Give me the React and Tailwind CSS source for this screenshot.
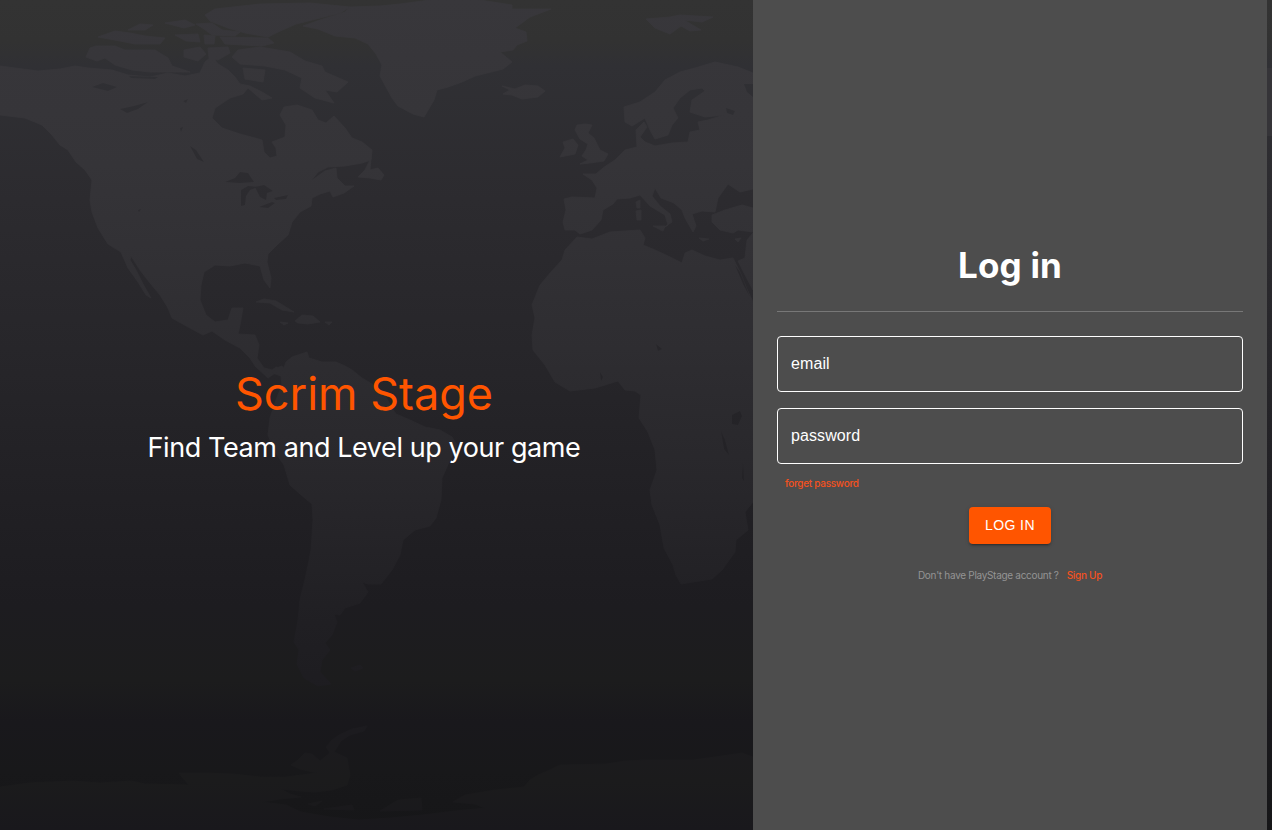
const LAND = [
  // North America
  'M0 66L15 68 38 71 60 69 75 66 88 68 112 70 128 75 150 77 168 73 185 76 200 73 205 62 212 56 218 64 228 70 235 77 240 84 250 86 262 92 272 98 262 100 248 88 243 94 230 98 215 108 212 118 222 128 240 134 262 140 264 152 270 158 277 156 276 148 272 142 285 137 286 125 280 115 284 107 297 105 312 110 318 120 326 123 334 116 345 128 352 138 362 142 372 150 371 160 362 163 345 166 328 167 318 172 311 181 325 171 336 168 337 178 345 186 354 186 344 193 333 197 330 191 320 194 312 198 311 206 300 212 292 222 288 235 277 245 268 254 267 262 271 278 270 288 264 280 260 266 245 263 230 266 215 265 204 272 201 285 200 300 206 315 215 322 228 320 232 308 243 308 240 325 238 334 255 335 259 345 257 358 264 368 272 370 282 366 287 373 275 373 268 378 255 366 250 358 240 348 225 340 212 331 203 335 190 328 172 318 168 308 160 295 150 283 140 270 131 256 130 260 136 270 143 284 151 298 146 295 138 282 128 268 121 252 108 244 98 228 92 212 90 200 92 180 85 170 76 162 68 150 60 145 52 135 42 125 25 118 0 115Z',
  // Arctic islands
  'M86 57L90 48 96 46 115 46 125 50 155 50 168 58 172 66 190 72 150 72 132 70 115 65 105 58 97 61Z',
  'M98 37L115 31 130 33 145 36 165 38 160 44 135 44 120 41Z M128 30L140 24 153 25 145 30Z M165 23L185 20 195 25 184 28Z M175 35L198 34 200 42 186 41Z M204 35L215 36 214 44 205 44Z M220 37L268 38 274 43 262 46 225 44Z M196 24L212 23 222 30 240 32 235 36 212 35 204 29Z M184 50L200 47 206 54 198 61 184 57Z M208 48L228 47 230 53 218 60 209 58Z M243 68L265 70 263 82 245 79Z',
  'M205 15L215 9 260 4 310 3 350 7 340 13 320 18 296 24 278 32 268 37 245 33 228 28 210 21Z',
  'M238 50L260 47 290 52 305 61 322 66 325 72 348 82 337 92 325 90 334 103 315 98 300 88 302 78 285 70 265 66 240 64 232 57Z',
  // Greenland
  'M303 26L320 20 345 12 350 7 380 6 400 4 430 0 480 0 512 5 512 9 551 9 530 17 515 28 526 32 527 41 517 45 513 50 500 52 512 62 503 69 475 76 462 82 448 87 437 90 434 100 424 117 413 114 398 106 392 98 386 87 380 76 382 65 376 54 368 44 355 38 335 36 318 29Z',
  'M502 86L515 89 525 85 538 86 545 91 538 97 522 99 512 95 503 94 510 90Z',
  'M646 19L670 17 680 15 713 17 702 22 684 20 701 30 690 31 681 26 670 34 655 28Z',
  // Newfoundland and Caribbean
  'M371 158L365 170 358 177 370 178 381 180 384 175 378 168 370 170Z M256 302L264 299 276 301 294 312 282 310 270 303Z M295 321L302 315 313 316 320 322 308 324 298 323Z M280 322L288 323 284 325Z M325 322L332 322 329 325Z',
  // Great Britain and Ireland
  'M577 125L585 124 592 125 588 133 594 138 600 150 608 154 604 161 590 163 580 164 588 160 582 156 586 150 588 144 580 139 575 130Z M560 157L565 148 563 142 573 139 578 145 575 154Z',
  // Europe
  'M753 73L738 67 715 62 695 68 680 72 665 80 655 92 640 102 624 107 625 122 632 126 645 118 650 130 655 139 668 135 672 125 678 118 673 108 680 98 690 90 702 88 705 91 692 100 690 112 705 117 724 115 708 120 698 122 700 130 690 132 688 142 672 143 655 146 645 142 640 137 647 127 644 122 636 130 637 147 625 150 615 160 603 168 596 174 583 174 592 180 597 188 595 198 572 197 564 199 566 210 563 222 565 230 575 230 580 234 592 230 601 220 603 210 613 204 617 199 630 198 640 195 650 206 665 215 668 225 660 230 672 222 670 214 660 206 652 196 655 188 661 198 674 203 682 210 685 218 693 232 696 226 692 214 702 211 715 212 718 198 728 184 740 192 753 189Z',
  'M712 215L725 210 742 205 753 208 753 232 738 230 733 233 720 230 712 222Z M636 202L640 200 640 208 637 208Z M636 211L641 210 641 220 637 220Z M653 226L665 226 663 231Z M699 238L709 239 703 241Z M735 239L741 238 738 242Z',
  // Africa
  'M577 237L592 239 610 232 640 230 645 238 643 245 655 250 668 256 682 263 685 253 692 250 705 256 720 260 733 258 740 272 746 287 753 302 753 502 745 512 748 530 736 540 735 552 722 570 712 579 693 582 681 584 676 575 673 565 664 548 660 525 652 505 650 490 657 470 655 450 648 432 639 418 641 395 635 391 625 390 618 381 595 388 570 391 555 382 545 365 533 350 532 335 535 318 532 305 540 285 551 272 562 260 565 250Z',
  'M753 233L747 240 745 258 738 261 744 273 753 290Z',
  // South America
  'M270 372L276 367 283 370 286 362 292 357 307 352 309 358 322 362 336 362 345 366 352 370 362 378 372 384 385 395 392 408 396 414 410 420 425 427 440 430 452 437 457 445 450 460 442 478 441 500 436 518 430 526 415 530 403 540 400 555 392 570 381 584 368 584 362 582 368 592 360 603 345 608 340 615 334 614 337 622 332 635 325 643 330 650 322 660 320 672 331 684 318 686 304 678 297 664 299 650 294 642 298 620 300 600 306 575 311 550 313 520 312 504 300 494 290 485 284 465 275 452 268 435 270 418 276 400 282 385 281 376Z',
  'M351 668L360 665 363 668 355 671Z',
  // Antarctica
  'M0 787L29 783 73 781 100 783 131 781 145 784 189 785 182 777 179 773 205 773 233 774 260 777 286 777 317 773 300 769 291 765 298 760 305 753 312 754 320 761 330 753 326 747 332 740 339 735 352 729 367 726 364 731 350 735 341 741 334 752 347 758 350 775 347 785 332 790 315 792 300 791 281 789 290 794 301 797 280 799 262 802 286 805 301 812 330 817 359 820 390 818 422 815 455 811 485 808 475 804 453 802 465 795 495 790 524 787 530 780 538 775 550 770 560 765 606 764 625 761 645 760 693 760 715 757 742 753 753 757 753 830 0 830Z',
  'M308 804L322 801 315 806Z M324 809L352 805 354 810Z M380 811L398 800 421 798 422 810Z',
];

// Lakes and inland channels
const WATER = [
  'M92 87L103 83 117 87 108 91Z M120 109L134 106 148 102 138 109 127 113Z M183 101L188 99 186 103Z M180 128L183 127 181 132Z M190 146L196 150 204 162 197 159Z M225 182L235 178 240 172 248 173 254 182 240 183Z M241 190L248 186 258 187 250 190 246 196 245 205 241 206Z M255 187L264 185 273 191 267 193 266 200 260 197Z M259 207L272 202 275 203 268 208Z M274 198L288 195 286 199 276 200Z M138 210L141 209 139 212Z M129 76L158 77 155 79 131 78Z',
  'M726 108L735 111 733 115 727 113Z M744 84L753 84 753 97 747 92Z M656 344L662 349 658 351Z M732 415L740 411 742 416 738 425 732 424Z M721 431L725 440 729 455 724 449Z M743 462L744 481 742 478Z M600 372L603 377 601 381Z M735 265L740 272 750 297 743 284Z',
];

function WorldMap() {
  return (
    <svg
      className="absolute left-0 top-0 h-[830px] w-[753px]"
      viewBox="0 0 753 830"
      aria-hidden="true"
    >
      <defs>
        <linearGradient id="land" gradientUnits="userSpaceOnUse" x1="0" y1="0" x2="0" y2="830">
          <stop offset="0" stopColor="#38373b" />
          <stop offset="0.2" stopColor="#353438" />
          <stop offset="0.42" stopColor="#2e2d31" />
          <stop offset="0.6" stopColor="#27262a" />
          <stop offset="0.75" stopColor="#201f23" />
          <stop offset="0.88" stopColor="#1c1b1f" />
          <stop offset="0.94" stopColor="#1b1b1c" />
          <stop offset="1" stopColor="#19181c" />
        </linearGradient>
        <linearGradient id="water" gradientUnits="userSpaceOnUse" x1="0" y1="0" x2="0" y2="830">
          <stop offset="0.08" stopColor="#303034" />
          <stop offset="0.24" stopColor="#2c2b2f" />
          <stop offset="0.6" stopColor="#222125" />
        </linearGradient>
      </defs>
      <g fill="url(#land)" stroke="url(#land)" strokeWidth="0.8" strokeLinejoin="round">
        {LAND.map((d) => (
          <path key={d} d={d} />
        ))}
      </g>
      <g fill="url(#water)">
        {WATER.map((d) => (
          <path key={d} d={d} />
        ))}
      </g>
    </svg>
  );
}

function Field({ label, type }) {
  return (
    <input
      type={type}
      placeholder={label}
      aria-label={label}
      className="h-14 w-full rounded border border-white bg-transparent px-[13px] font-['Liberation_Sans',sans-serif] text-base tracking-[0.1px] text-white outline-none placeholder:text-white placeholder:opacity-100"
    />
  );
}

export default function App() {
  return (
    <div className="relative flex h-[830px] w-full overflow-hidden bg-[linear-gradient(to_bottom,#333333_0%,#323232_5%,#303034_8%,#2c2b2f_24%,#27262a_42%,#212024_60%,#1d1c20_73%,#1c1c1d_82%,#19181c_87%,#18181a_93%,#161618_100%)] font-['Inter',sans-serif]">
      <WorldMap />
      <section className="relative flex w-[753px] shrink-0 flex-col items-center justify-center pr-[25px] pt-[3px]">
        <h1 className="whitespace-nowrap text-[45px] leading-[56px] text-[#ff5500]">Scrim Stage</h1>
        <p className="mt-1.5 whitespace-nowrap text-[27px] leading-10 tracking-[-0.42px] text-white">
          Find Team and Level up your game
        </p>
      </section>
      <main className="relative flex w-[514px] shrink-0 flex-col bg-[#4d4d4d] px-6 pt-[244px]">
        <h2 className="text-center text-[35px] font-bold leading-[43px] tracking-[0.2px] text-white">Log in</h2>
        <hr className="mt-6 border-0 border-t border-[#777777]" />
        <form className="mt-6 flex flex-col" onSubmit={(e) => e.preventDefault()}>
          <div className="flex flex-col gap-4">
            <Field label="email" type="email" />
            <Field label="password" type="password" />
          </div>
          <a className="ml-2 mt-[11px] self-start whitespace-nowrap text-[10px] font-medium leading-4 tracking-[-0.3px] text-[#f4511e]">
            forget password
          </a>
          <button
            type="submit"
            className="mt-4 h-[37px] w-[82px] self-center whitespace-nowrap rounded bg-[#ff5500] pb-0.5 font-['Liberation_Sans',sans-serif] text-sm tracking-[0.4px] text-white shadow-[0_3px_1px_-2px_rgba(0,0,0,0.2),0_2px_2px_0_rgba(0,0,0,0.14),0_1px_5px_0_rgba(0,0,0,0.12)]"
          >
            LOG IN
          </button>
          <p className="mt-[23px] flex justify-center gap-2 whitespace-nowrap text-[10px] leading-4 tracking-[-0.3px] text-[#949494]">
            <span>Don't have PlayStage account ?</span>
            <a className="font-medium text-[#f4511e]">Sign Up</a>
          </p>
        </form>
      </main>
      <div className="flex flex-1 flex-col pt-[68px]">
        <div className="h-[68px] bg-[#353438]" />
      </div>
    </div>
  );
}
